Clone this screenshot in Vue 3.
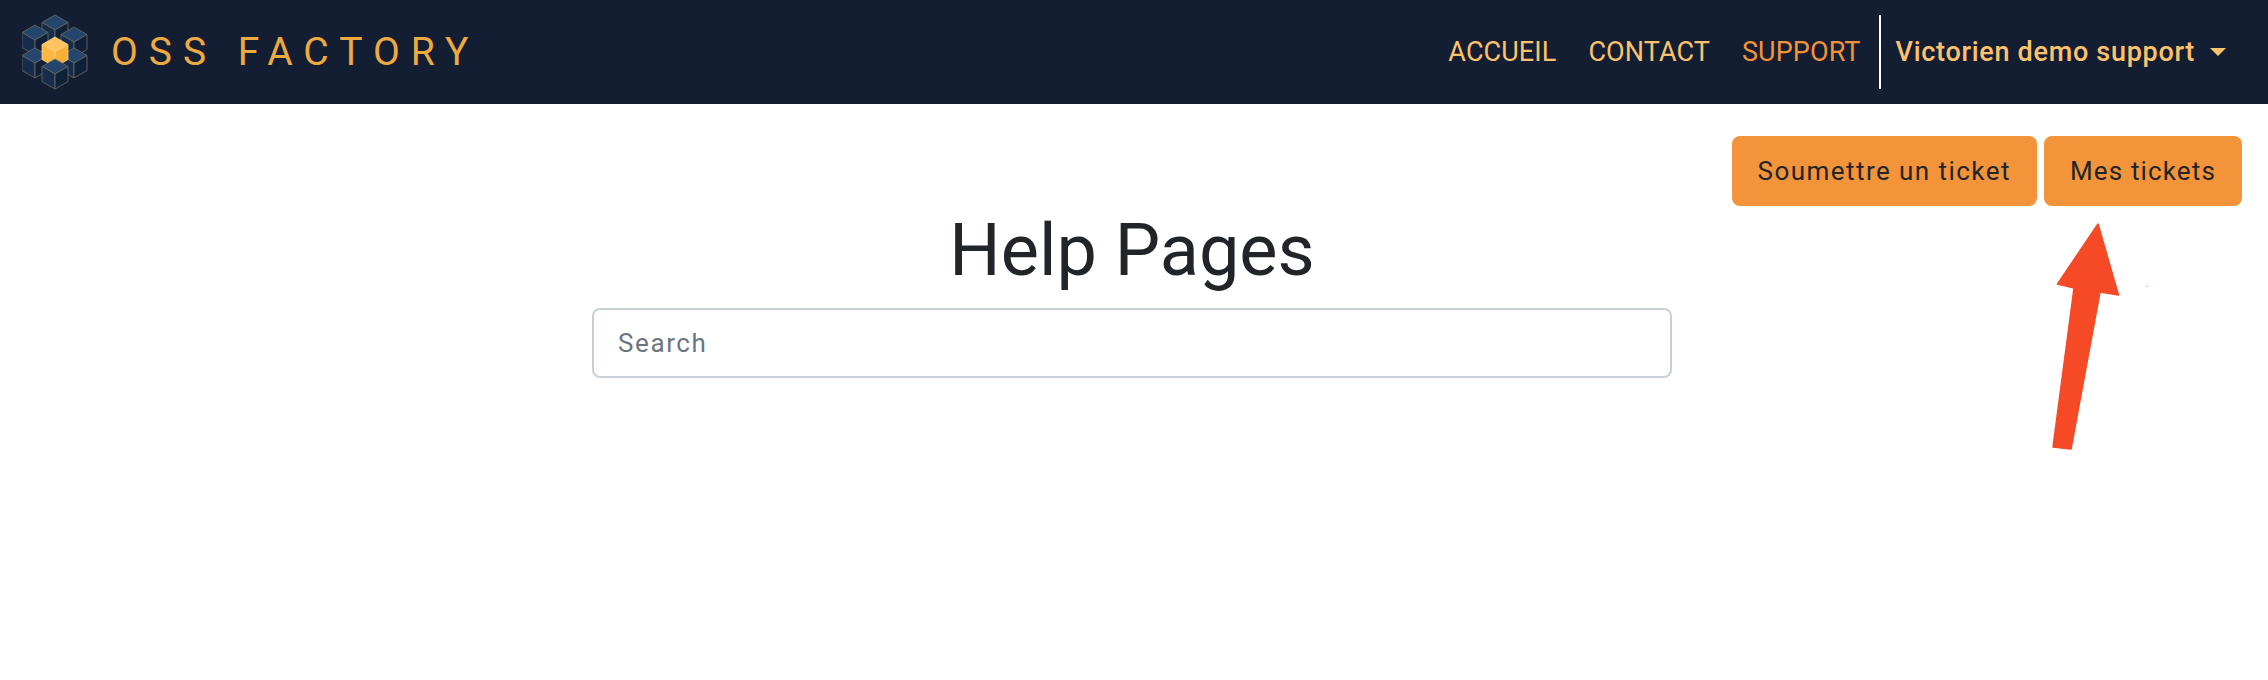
<script setup>
const cubes = [
  { x: 55, y: 14, gold: false },
  { x: 35, y: 24, gold: false },
  { x: 74, y: 26, gold: false },
  { x: 35, y: 47, gold: false },
  { x: 74, y: 47, gold: false },
  { x: 55, y: 36, gold: true },
  { x: 55, y: 58, gold: false },
];

const links = [
  { label: "ACCUEIL", active: false },
  { label: "CONTACT", active: false },
  { label: "SUPPORT", active: true },
];
</script>

<template>
  <div class="page">
    <header class="navbar">
      <a class="brand">
        <svg class="logo" width="66" height="76" viewBox="22 13 66 76">
          <g v-for="(c, i) in cubes" :key="i" :transform="`translate(${c.x} ${c.y})`" :class="{ gold: c.gold }" class="cube">
            <path class="top" d="M0 0L13 7.5L0 15L-13 7.5Z" />
            <path class="left" d="M-13 7.5L0 15L0 30L-13 22.5Z" />
            <path class="right" d="M13 7.5L0 15L0 30L13 22.5Z" />
          </g>
        </svg>
        <span class="brand-name">OSS FACTORY</span>
      </a>
      <nav class="nav">
        <a v-for="link in links" :key="link.label" class="nav-link" :class="{ active: link.active }">{{ link.label }}</a>
        <span class="divider"></span>
        <a class="user">Victorien demo support<i class="caret"></i></a>
      </nav>
    </header>

    <main class="content">
      <div class="actions">
        <button class="btn">Soumettre un ticket</button>
        <button class="btn btn-short">Mes tickets</button>
      </div>
      <h1 class="title">Help Pages</h1>
      <input class="search" type="text" placeholder="Search" />
    </main>

    <!-- annotation drawn over the screenshot -->
    <svg class="arrow" width="2268" height="680" viewBox="0 0 2268 680">
      <path d="M2098 224L2118.5 295L2100 292L2071 449L2053 447L2074 288L2057.5 284Z" fill="#f54a25" stroke="#f54a25" stroke-width="1.5" stroke-linejoin="round" />
      <rect x="2146" y="286" width="2" height="1" fill="#fbb5a5" />
    </svg>
  </div>
</template>

<style>
body {
  background: #fff;
}
</style>

<style scoped>
.page {
  position: relative;
  height: 680px;
  overflow: hidden;
  font-family: Roboto, "Liberation Sans", sans-serif;
  color: #212529;
}

.navbar {
  height: 104px;
  background: #131e32;
  display: flex;
  align-items: center;
  justify-content: space-between;
  padding: 0 42px 0 22px;
}

.brand {
  display: flex;
  align-items: center;
  gap: 23px;
}

.logo {
  display: block;
}

.cube path {
  stroke: #6f6c5f;
  stroke-width: 0.8;
  stroke-linejoin: round;
}
.cube .top {
  fill: #24466e;
}
.cube .left {
  fill: #152c4d;
}
.cube .right {
  fill: #0f2039;
}
.cube.gold path {
  stroke: #fdd080;
}
.cube.gold .top {
  fill: #fdc45f;
}
.cube.gold .left {
  fill: #fbb83e;
}
.cube.gold .right {
  fill: #f8b036;
}

.brand-name {
  font-size: 39px;
  font-weight: 400;
  letter-spacing: 11px;
  color: #edaa40;
  white-space: nowrap;
}

.nav {
  display: flex;
  align-items: center;
  gap: 32px;
}

.nav-link {
  font-size: 27px;
  letter-spacing: 0.1px;
  color: #fdc26b;
}

.nav-link.active {
  color: #f39237;
}

.divider {
  width: 2px;
  height: 74px;
  background: #fff;
  margin: 0 -17px 0 -14px;
}

.user {
  display: flex;
  align-items: center;
  font-size: 27px;
  font-weight: 500;
  letter-spacing: 0.7px;
  color: #fdc26b;
}

.caret {
  width: 0;
  height: 0;
  margin-left: 15px;
  border-top: 8px solid #fdc26b;
  border-left: 8px solid transparent;
  border-right: 8px solid transparent;
}

.content {
  display: flex;
  flex-direction: column;
  align-items: center;
  padding: 32px 26px 0;
}

.actions {
  align-self: flex-end;
  display: flex;
  gap: 7px;
}

.btn {
  height: 70px;
  padding: 0 26px;
  border: 0;
  border-radius: 8px;
  background: #f4943a;
  color: #212529;
  font-family: inherit;
  font-size: 26px;
  letter-spacing: 1.45px;
}

.btn-short {
  letter-spacing: 1.15px;
}

.title {
  margin: 0;
  font-size: 72px;
  font-weight: 400;
  line-height: 86px;
  margin-top: 2px;
  margin-right: 4px;
}

.search {
  box-sizing: border-box;
  width: 1080px;
  height: 70px;
  margin-top: 14px;
  margin-right: 4px;
  padding: 0 24px;
  border: 2px solid #c9cfd6;
  border-radius: 8px;
  background: #fff;
  font-family: inherit;
  font-size: 26px;
  letter-spacing: 1.6px;
  color: #212529;
  outline: none;
}

.search::placeholder {
  color: #6c757d;
}

.arrow {
  position: absolute;
  left: 0;
  top: 0;
  pointer-events: none;
}
</style>
